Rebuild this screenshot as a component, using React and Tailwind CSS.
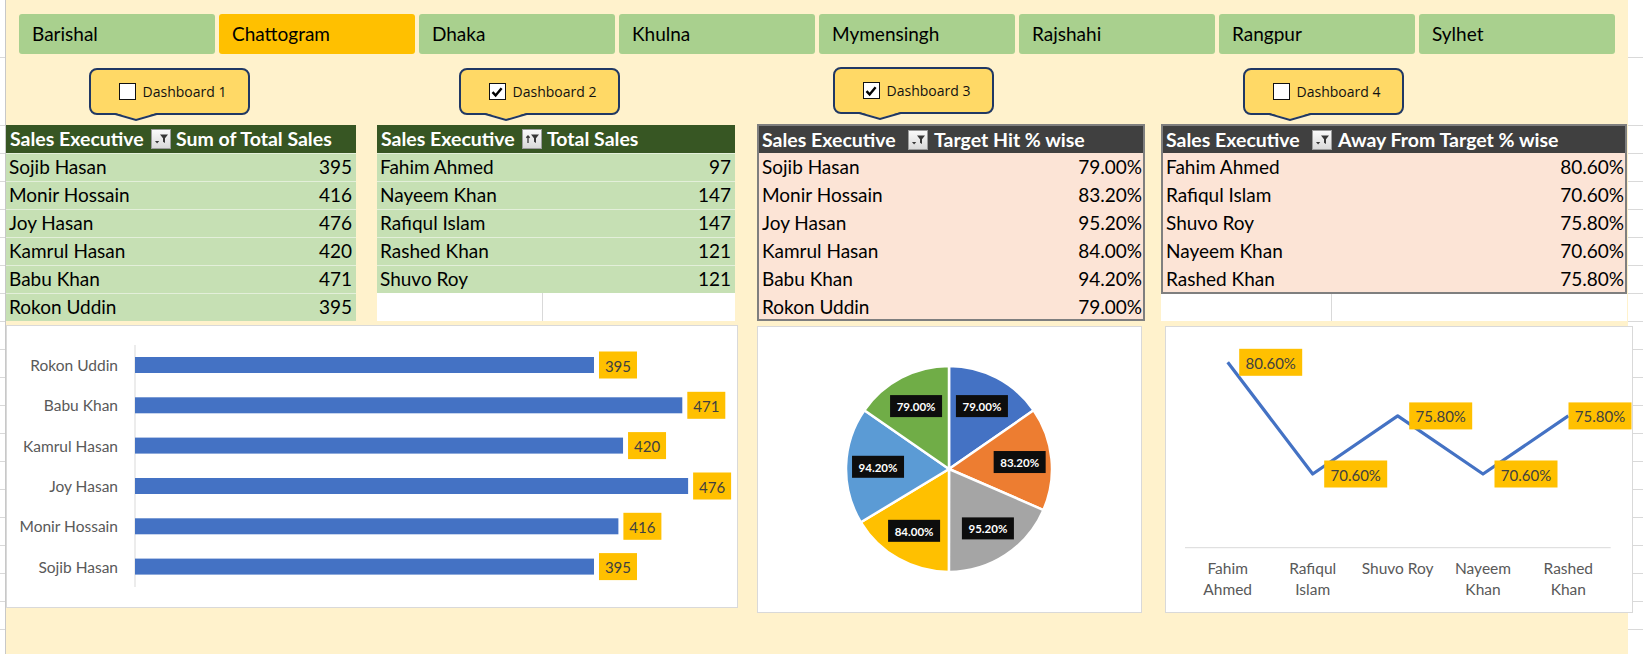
import React from "react";

const CITIES = ["Barishal", "Chattogram", "Dhaka", "Khulna", "Mymensingh", "Rajshahi", "Rangpur", "Sylhet"];

const SALES = [
  ["Sojib Hasan", 395],
  ["Monir Hossain", 416],
  ["Joy Hasan", 476],
  ["Kamrul Hasan", 420],
  ["Babu Khan", 471],
  ["Rokon Uddin", 395],
];

const TOTAL = [
  ["Fahim Ahmed", 97],
  ["Nayeem Khan", 147],
  ["Rafiqul Islam", 147],
  ["Rashed Khan", 121],
  ["Shuvo Roy", 121],
];

const TARGET = [
  ["Sojib Hasan", 79],
  ["Monir Hossain", 83.2],
  ["Joy Hasan", 95.2],
  ["Kamrul Hasan", 84],
  ["Babu Khan", 94.2],
  ["Rokon Uddin", 79],
];

const AWAY = [
  ["Fahim Ahmed", 80.6, ["Fahim", "Ahmed"]],
  ["Rafiqul Islam", 70.6, ["Rafiqul", "Islam"]],
  ["Shuvo Roy", 75.8, ["Shuvo Roy"]],
  ["Nayeem Khan", 70.6, ["Nayeem", "Khan"]],
  ["Rashed Khan", 75.8, ["Rashed", "Khan"]],
];

const PIE_COLORS = ["#4472C4", "#ED7D31", "#A5A5A5", "#FFC000", "#5B9BD5", "#70AD47"];

const pct = (v) => v.toFixed(2) + "%";

// spreadsheet cells peeking out at the sides
const GridStrip = ({ className }) => (
  <div className={"flex flex-col bg-white shrink-0 " + className}>
    <div className="h-[58px] shrink-0 border-b border-[#D9D9D9]" />
    <div className="h-[68px] shrink-0 border-b border-[#D9D9D9]" />
    {Array.from({ length: 19 }).map((_, i) => (
      <div key={i} className="h-[28px] shrink-0 border-b border-[#D9D9D9]" />
    ))}
  </div>
);

const FilterIcon = ({ sorted }) => (
  <svg width="20" height="20" viewBox="0 0 20 20" className="shrink-0">
    <defs>
      <linearGradient id="fbtn" x1="0" y1="0" x2="0" y2="1">
        <stop offset="0" stopColor="#FBFBFB" />
        <stop offset="1" stopColor="#D8D8D8" />
      </linearGradient>
    </defs>
    <rect x="0.5" y="0.5" width="19" height="19" fill="url(#fbtn)" stroke="#9C9C9C" />
    <path d="M9 5.5h8l-3 3.8v4.7l-2-1.2V9.3z" fill="#383838" />
    {sorted ? (
      <path d="M6 14V7M4.3 8.8L6 7l1.7 1.8" stroke="#383838" strokeWidth="1.3" fill="none" />
    ) : (
      <path d="M4 12h4.2l-2.1 2.4z" fill="#383838" />
    )}
  </svg>
);

const Checkbox = ({ checked }) => (
  <div className="w-[17px] h-[17px] bg-white border-[1.5px] border-[#111] flex items-center justify-center">
    {checked && (
      <svg width="12" height="12" viewBox="0 0 12 12">
        <path d="M1.5 6.2L4.6 9.4L10.6 2.2" stroke="#000" strokeWidth="2.4" fill="none" />
      </svg>
    )}
  </div>
);

const Callout = ({ label, checked, className }) => (
  <div className={"relative w-[161px] h-[47px] shrink-0 " + className}>
    <div className="w-full h-full rounded-[8px] border-2 border-[#203864] bg-[#FFD966] flex items-center justify-center gap-[7px] pl-[6px]">
      <Checkbox checked={checked} />
      <span className="font-['Open_Sans',sans-serif] text-[14px] text-[#111]">{label}</span>
    </div>
    <svg width="42" height="11" viewBox="0 0 42 11" className="absolute left-[26px] top-[44px]">
      <polygon points="0,0 42,0 42,1 21,7 0,1" fill="#FFD966" />
      <polyline points="0,2 21,8 42,2" fill="none" stroke="#203864" strokeWidth="2" />
    </svg>
  </div>
);

const GreenTable = ({ title, rows, sorted, className }) => (
  <div className={"mt-[1px] shrink-0 " + className}>
    <div className="h-[28px] bg-[#375623] text-white font-bold text-[19.5px] flex items-center">
      <div className="w-[166px] flex items-center justify-between pl-[4px] pr-[1px]">
        <span>Sales Executive</span>
        <FilterIcon sorted={sorted} />
      </div>
      <span className="pl-[4px]">{title}</span>
    </div>
    {rows.map(([name, val]) => (
      <div
        key={name}
        className="h-[28px] bg-[#C6E0B4] border-t border-[#E3EFDA] flex items-center justify-between pl-[3px] pr-[4px]"
      >
        <span>{name}</span>
        <span>{val}</span>
      </div>
    ))}
    {rows.length < 6 && (
      <div className="h-[28px] bg-white flex">
        <div className="w-[166px] border-r border-[#D9D9D9]" />
      </div>
    )}
  </div>
);

const PeachTable = ({ title, rows, className, height }) => (
  <div className={"shrink-0 " + className}>
    <div className={"border-2 border-[#7F7F7F] bg-[#FCE4D6] overflow-hidden " + height}>
      <div className="h-[27px] bg-[#404040] text-white font-bold text-[19.5px] flex items-center">
        <div className="w-[170px] flex items-center justify-between pl-[3px] pr-[1px]">
          <span>Sales Executive</span>
          <FilterIcon />
        </div>
        <span className="pl-[5px]">{title}</span>
      </div>
      {rows.map(([name, val]) => (
        <div key={name} className="h-[28px] flex items-center justify-between pl-[3px] pr-[1px]">
          <span>{name}</span>
          <span>{pct(val)}</span>
        </div>
      ))}
    </div>
  </div>
);

const BarChart = () => {
  const axisX = 129;
  const centers = [40, 80.3, 120.6, 161, 201.3, 241.6];
  const data = [...SALES].reverse();
  return (
    <div className="w-[732px] h-[283px] shrink-0 bg-white border border-[#D9D9D9]">
      <svg width="730" height="281" viewBox="1 1 730 281" className="font-[Lato,sans-serif]">
        <line x1={axisX} y1="20" x2={axisX} y2="262" stroke="#D9D9D9" strokeWidth="1" />
        {data.map(([name, val], i) => {
          const cy = centers[i];
          const w = val * 1.162;
          return (
            <g key={name}>
              <text x="112" y={cy} textAnchor="end" dominantBaseline="central" fontSize="15.5" fill="#595959">
                {name}
              </text>
              <rect x={axisX} y={cy - 8} width={w} height="16" fill="#4472C4" />
              <rect x={axisX + w + 5} y={cy - 13.5} width="38" height="27" fill="#FFC000" />
              <text
                x={axisX + w + 24}
                y={cy + 0.5}
                textAnchor="middle"
                dominantBaseline="central"
                fontSize="15"
                fill="#404040"
              >
                {val}
              </text>
            </g>
          );
        })}
      </svg>
    </div>
  );
};

const PieChart = () => {
  const cx = 192;
  const cy = 143;
  const r = 103;
  const total = TARGET.reduce((s, [, v]) => s + v, 0);
  let acc = 0;
  const pt = (deg, rad) => {
    const a = ((deg - 90) * Math.PI) / 180;
    return [cx + rad * Math.cos(a), cy + rad * Math.sin(a)];
  };
  const slices = TARGET.map(([name, v], i) => {
    const start = (acc / total) * 360;
    acc += v;
    const end = (acc / total) * 360;
    const [x1, y1] = pt(start, r);
    const [x2, y2] = pt(end, r);
    const large = end - start > 180 ? 1 : 0;
    const d = `M${cx} ${cy} L${x1} ${y1} A${r} ${r} 0 ${large} 1 ${x2} ${y2} Z`;
    const [lx, ly] = pt((start + end) / 2, 71);
    return { name, v, d, lx, ly, color: PIE_COLORS[i] };
  });
  return (
    <div className="w-[385px] h-[287px] shrink-0 bg-white border border-[#D9D9D9]">
      <svg width="383" height="285" viewBox="1 1 383 285" className="font-[Lato,sans-serif]">
        {slices.map((s) => (
          <path key={s.name} d={s.d} fill={s.color} stroke="#fff" strokeWidth="2.5" strokeLinejoin="round" />
        ))}
        {slices.map((s) => (
          <g key={s.name + "l"}>
            <rect x={s.lx - 26} y={s.ly - 11} width="52" height="22" fill="#0D0D0D" />
            <text
              x={s.lx}
              y={s.ly + 0.5}
              textAnchor="middle"
              dominantBaseline="central"
              fontSize="11.5"
              fontWeight="700"
              fill="#fff"
            >
              {pct(s.v)}
            </text>
          </g>
        ))}
      </svg>
    </div>
  );
};

const LineChart = () => {
  const xs = [62.7, 147.7, 232.7, 318, 403.3];
  const pts = AWAY.map(([, v], i) => [xs[i], 36.3 + (80.6 - v) * 11.17]);
  return (
    <div className="relative z-10 w-[468px] h-[287px] shrink-0 bg-white border border-[#D9D9D9]">
      <svg width="466" height="285" viewBox="1 1 466 285" className="font-[Lato,sans-serif]">
        <line x1="20" y1="221.7" x2="445.7" y2="221.7" stroke="#D9D9D9" strokeWidth="1" />
        <polyline
          points={pts.map((p) => p.join(",")).join(" ")}
          fill="none"
          stroke="#4472C4"
          strokeWidth="3.2"
          strokeLinejoin="round"
        />
        {AWAY.map(([name, v, lines], i) => {
          const [px, py] = pts[i];
          // label is pushed back inside the plot when it would run past the edge
          const lx = Math.min(px + 11.5, 403.5);
          return (
            <g key={name}>
              <rect x={lx} y={py - 13.5} width="63" height="27" fill="#FFC000" />
              <text
                x={lx + 31.5}
                y={py + 0.5}
                textAnchor="middle"
                dominantBaseline="central"
                fontSize="15"
                fill="#404040"
              >
                {pct(v)}
              </text>
              {lines.map((ln, j) => (
                <text
                  key={ln}
                  x={px}
                  y={242.3 + j * 21}
                  textAnchor="middle"
                  dominantBaseline="central"
                  fontSize="15.5"
                  fill="#595959"
                >
                  {ln}
                </text>
              ))}
            </g>
          );
        })}
      </svg>
    </div>
  );
};

export default function App() {
  return (
    <div className="w-[1643px] h-[654px] flex overflow-hidden bg-white font-[Lato,sans-serif] text-[19px] text-black">
      <GridStrip className="w-[6px] border-r border-[#C8C8C8]" />

      <div className="w-[1622px] shrink-0 bg-[#FFF2CC]">
        {/* Slicer */}
        <div className="flex gap-[4px] pt-[14px] pl-[13px]">
          {CITIES.map((c) => (
            <div
              key={c}
              className={
                "w-[196px] h-[40px] rounded-[3px] flex items-center pl-[13px] " +
                (c === "Chattogram" ? "bg-[#FFC000]" : "bg-[#A9D08E]")
              }
            >
              {c}
            </div>
          ))}
        </div>

        {/* Dashboard toggles */}
        <div className="h-[70px] pt-[14px] flex items-start">
          <Callout label="Dashboard 1" className="ml-[83px]" />
          <Callout label="Dashboard 2" checked className="ml-[209px]" />
          <Callout label="Dashboard 3" checked className="ml-[213px] -mt-[1px]" />
          <Callout label="Dashboard 4" className="ml-[249px]" />
        </div>

        {/* Pivot tables */}
        <div className="flex items-start h-[197px]">
          <GreenTable title="Sum of Total Sales" rows={SALES} className="w-[350px]" />
          <GreenTable title="Total Sales" rows={TOTAL} sorted className="w-[358px] ml-[21px]" />
          <PeachTable title="Target Hit % wise" rows={TARGET} className="w-[388px] ml-[22px]" height="h-[197px]" />
          <div className="w-[466px] ml-[16px] shrink-0">
            <PeachTable title="Away From Target % wise" rows={AWAY} className="w-[466px]" height="h-[170px]" />
            <div className="h-[27px] bg-white flex">
              <div className="w-[171px] border-r border-[#D9D9D9]" />
            </div>
          </div>
        </div>

        {/* Charts */}
        <div className="flex items-start mt-[4px]">
          <BarChart />
          <div className="ml-[19px] mt-[1px]">
            <PieChart />
          </div>
          <div className="ml-[23px] mt-[1px]">
            <LineChart />
          </div>
        </div>
      </div>

      <GridStrip className="w-[15px]" />
    </div>
  );
}
